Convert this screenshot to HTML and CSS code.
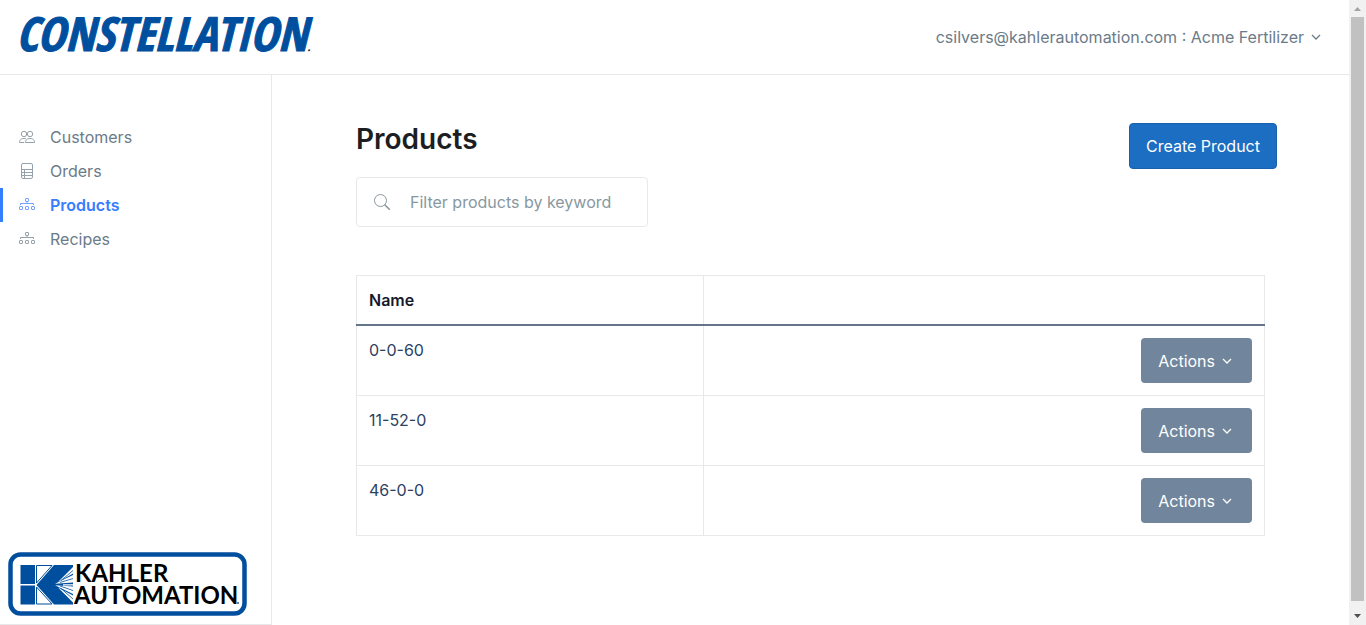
FILE: index.html
```
<!DOCTYPE html>
<html lang="en">
  <head>
    <meta charset="UTF-8" />
    <meta name="viewport" content="width=device-width, initial-scale=1.0" />
    <title>Products</title>
    <link rel="stylesheet" href="styles.css">
  </head>
  <body>
    <!-- shared icons -->
    <svg class="sprite" aria-hidden="true">
      <symbol id="chevron" viewBox="0 0 10 10">
        <path d="M1 3l4 4 4-4" fill="none" stroke="currentColor" stroke-width="1.3"/>
      </symbol>
      <symbol id="people" viewBox="0 0 16 16">
        <g fill="none" stroke="currentColor">
          <circle cx="11" cy="5" r="2.7"/>
          <circle cx="5" cy="5" r="2.7"/>
          <path d="M6.5 13.5h9c0-2-1-4-4.5-4s-4.5 2-4.5 4z"/>
          <path d="M5.2 13.5H.5c0-2 1-4 4.5-4 .8 0 1.500.1 2 .3"/>
        </g>
      </symbol>
      <symbol id="sheet" viewBox="0 0 16 16">
        <g fill="none" stroke="currentColor">
          <rect x="2.5" y=".5" width="11" height="15" rx="1.5"/>
          <path d="M2.5 6.5h11M2.5 9.5h11M2.5 12.5h11M5.5 6.5v9"/>
        </g>
      </symbol>
      <symbol id="diagram" viewBox="0 0 16 16">
        <g fill="none" stroke="currentColor">
          <rect x="6.5" y="1.5" width="3" height="3" rx=".5"/>
          <rect x=".5" y="9.5" width="3" height="3" rx=".5"/>
          <rect x="6.5" y="9.5" width="3" height="3" rx=".5"/>
          <rect x="12.5" y="9.5" width="3" height="3" rx=".5"/>
          <path d="M8 4.500V7M1.500 8V6.500h13V8"/>
        </g>
      </symbol>
    </svg>

    <div class="page">
      <header class="header">
        <a href="#" class="brand">CONSTELLATION<span class="brand-dot">.</span></a>
        <button class="user-menu">csilvers@kahlerautomation.com : Acme Fertilizer
          <svg class="chevron"><use href="#chevron"/></svg>
        </button>
      </header>

      <div class="content">
        <aside class="sidebar">
          <nav class="nav">
            <a href="#" class="nav-link"><svg class="nav-icon"><use href="#people"/></svg>Customers</a>
            <a href="#" class="nav-link"><svg class="nav-icon"><use href="#sheet"/></svg>Orders</a>
            <a href="#" class="nav-link active"><svg class="nav-icon"><use href="#diagram"/></svg>Products</a>
            <a href="#" class="nav-link"><svg class="nav-icon"><use href="#diagram"/></svg>Recipes</a>
          </nav>
          <a href="#" class="kahler" aria-label="Kahler Automation">
            <svg class="kahler-logo" viewBox="0 0 239 64">
              <rect x="2.5" y="2.5" width="234" height="59" rx="10" fill="#fff" stroke="#004f9e" stroke-width="4.5"/>
              <g fill="#004f9e">
                <path d="M12.500 13h14.500v19H12.500zM12.500 33.500h14.500v19H12.500z"/>
                <path d="M46 13h19v39.500H46L28.500 33z"/>
              </g>
              <path d="M28.500 31V13.500H44zM28.500 35v17H44z" fill="none" stroke="#004f9e"/>
              <!-- rays -->
              <g fill="#fff">
                <path d="M50 30L65 15v6.500zM47 31.700L65 23v7.500zM55 32.200h10v1.300H55zM47 33.300l18 1.200v7.500zM50 35.500l15 8v7z"/>
              </g>
              <path d="M53 28.500L65 18.500M52 30.500l13-4M52 34l13 4.500M53 36.500L65 47" fill="none" stroke="#004f9e" stroke-width=".8"/>
              <text class="kahler-text"><tspan x="67" y="30">KAHLER</tspan><tspan x="66" y="52">AUTOMATION</tspan></text>
              <circle cx="230" cy="51" r="1" fill="#555"/>
            </svg>
          </a>
        </aside>

        <main class="main">
          <div class="top-row">
            <div>
              <h1>Products</h1>
              <label class="search">
                <svg class="search-icon" viewBox="0 0 16 16">
                  <circle cx="6.5" cy="6.5" r="6" fill="none" stroke="currentColor"/>
                  <path d="M11 11l4.300 4.300" stroke="currentColor" stroke-width="1.6" stroke-linecap="round"/>
                </svg>
                <input type="text" class="search-input" placeholder="Filter products by keyword" aria-label="Filter products by keyword">
              </label>
            </div>
            <button class="btn btn-primary">Create Product</button>
          </div>

          <table class="table">
            <thead>
              <tr><th class="col-name">Name</th><th></th></tr>
            </thead>
            <tbody>
              <tr>
                <td>0-0-60</td>
                <td class="actions"><button class="btn btn-actions">Actions <svg class="chevron"><use href="#chevron"/></svg></button></td>
              </tr>
              <tr>
                <td>11-52-0</td>
                <td class="actions"><button class="btn btn-actions">Actions <svg class="chevron"><use href="#chevron"/></svg></button></td>
              </tr>
              <tr>
                <td>46-0-0</td>
                <td class="actions"><button class="btn btn-actions">Actions <svg class="chevron"><use href="#chevron"/></svg></button></td>
              </tr>
            </tbody>
          </table>
        </main>
      </div>
    </div>

    <div class="scrollbar" aria-hidden="true">
      <svg class="arrow" viewBox="2 0 13 17"><path d="M5 11h7L8.500 7z" fill="#a3a3a3"/></svg>
      <div class="thumb"></div>
      <svg class="arrow" viewBox="2 0 13 17"><path d="M5 6h7l-3.500 4z" fill="#505050"/></svg>
    </div>
  </body>
</html>
```
FILE: styles.css
```
*{
  box-sizing: border-box;
}
body{
  margin: 0;
  display: flex;
  min-height: 100vh;
  font-family: Inter, "Liberation Sans", sans-serif;
  font-size: 16px;
  line-height: 24px;
  color: #16192c;
  background-color: white;
}
button, input{
  font: inherit;
}
button{
  cursor: pointer;
}
a{
  text-decoration: none;
}
.sprite{
  display: none;
}
.page{
  flex: 1;
  display: flex;
  flex-direction: column;
}
.header{
  display: flex;
  justify-content: space-between;
  align-items: center;
  height: 75px;
  padding: 0 28px 0 16px;
  border-bottom: 1px solid #e7e8ea;
}
.brand{
  padding-top: 6px;
  font-family: "Liberation Sans Narrow", "Open Sans Condensed", "Liberation Sans", sans-serif;
  font-size: 47px;
  line-height: 48px;
  font-weight: bold;
  font-style: italic;
  color: #004f9e;
  -webkit-text-stroke: 1px #004f9e;
}
.brand-dot{
  font-size: 12px;
  color: #333;
  -webkit-text-stroke: 0;
}
.user-menu{
  display: flex;
  align-items: center;
  gap: 7px;
  padding: 0;
  border: none;
  background-color: transparent;
  color: #6b7b88;
}
.chevron{
  width: 10px;
  height: 10px;
}
.content{
  flex: 1;
  display: flex;
}
.sidebar{
  display: flex;
  flex-direction: column;
  justify-content: space-between;
  width: 272px;
  padding: 45px 0 8px;
  border-right: 1px solid #e7e8ea;
  border-bottom: 1px solid #e7e8ea;
}
.nav-link{
  display: flex;
  align-items: center;
  gap: 15px;
  height: 34px;
  padding-left: 16px;
  border-left: 3px solid transparent;
  color: #6b7b88;
}
.nav-icon{
  width: 16px;
  height: 16px;
  opacity: 0.7;
}
.nav-link.active{
  border-left-color: #377dff;
  color: #377dff;
  font-weight: 600;
}
.kahler{
  padding-left: 8px;
}
.kahler-logo{
  display: block;
  width: 239px;
  height: 64px;
}
.kahler-text{
  font-family: Lato, sans-serif;
  font-size: 24px;
  font-weight: bold;
  fill: #000;
}
.main{
  flex: 1;
  padding: 48px 72px 0 84px;
}
.top-row{
  display: flex;
  justify-content: space-between;
  align-items: flex-start;
}
h1{
  margin: 0 0 22px;
  font-size: 28px;
  line-height: 32px;
  font-weight: 600;
  color: #1c1e22;
}
.search{
  display: flex;
  align-items: center;
  gap: 20px;
  width: 292px;
  height: 50px;
  padding: 0 17px;
  border: 1px solid #e7e8ea;
  border-radius: 4px;
  color: #8898a0;
}
.search-icon{
  flex: none;
  width: 16px;
  height: 16px;
}
.search-input{
  flex: 1;
  min-width: 0;
  padding: 0;
  border: none;
  outline: none;
  color: #16192c;
}
.search-input::placeholder{
  color: #8898a0;
}
.btn{
  height: 46px;
  padding: 0 16px;
  border: 1px solid transparent;
  border-radius: 4px;
  color: white;
}
.btn-primary{
  background-color: #1b6ec2;
  border-color: #1861ac;
}
.table{
  width: calc(100% - 12px);
  margin-top: 48px;
  border-collapse: collapse;
  table-layout: fixed;
}
th, td{
  padding: 12px;
  border: 1px solid #e7e8ea;
  text-align: left;
  vertical-align: top;
}
thead th{
  border-bottom: 2px solid #64748b;
  font-weight: 600;
  color: #16192c;
}
.col-name{
  width: 347px;
}
td{
  color: #2d3f63;
}
.actions{
  text-align: right;
}
.btn-actions{
  display: inline-flex;
  align-items: center;
  gap: 7px;
  height: 45px;
  padding-right: 19px;
  background-color: #71859c;
  vertical-align: top;
}
.scrollbar{
  display: flex;
  flex-direction: column;
  width: 17px;
  padding: 0 2px;
  background-color: #f1f1f1;
}
.thumb{
  flex: 1;
  margin-bottom: 7px;
  background-color: #c1c1c1;
}
.arrow{
  width: 13px;
  height: 17px;
}
```
